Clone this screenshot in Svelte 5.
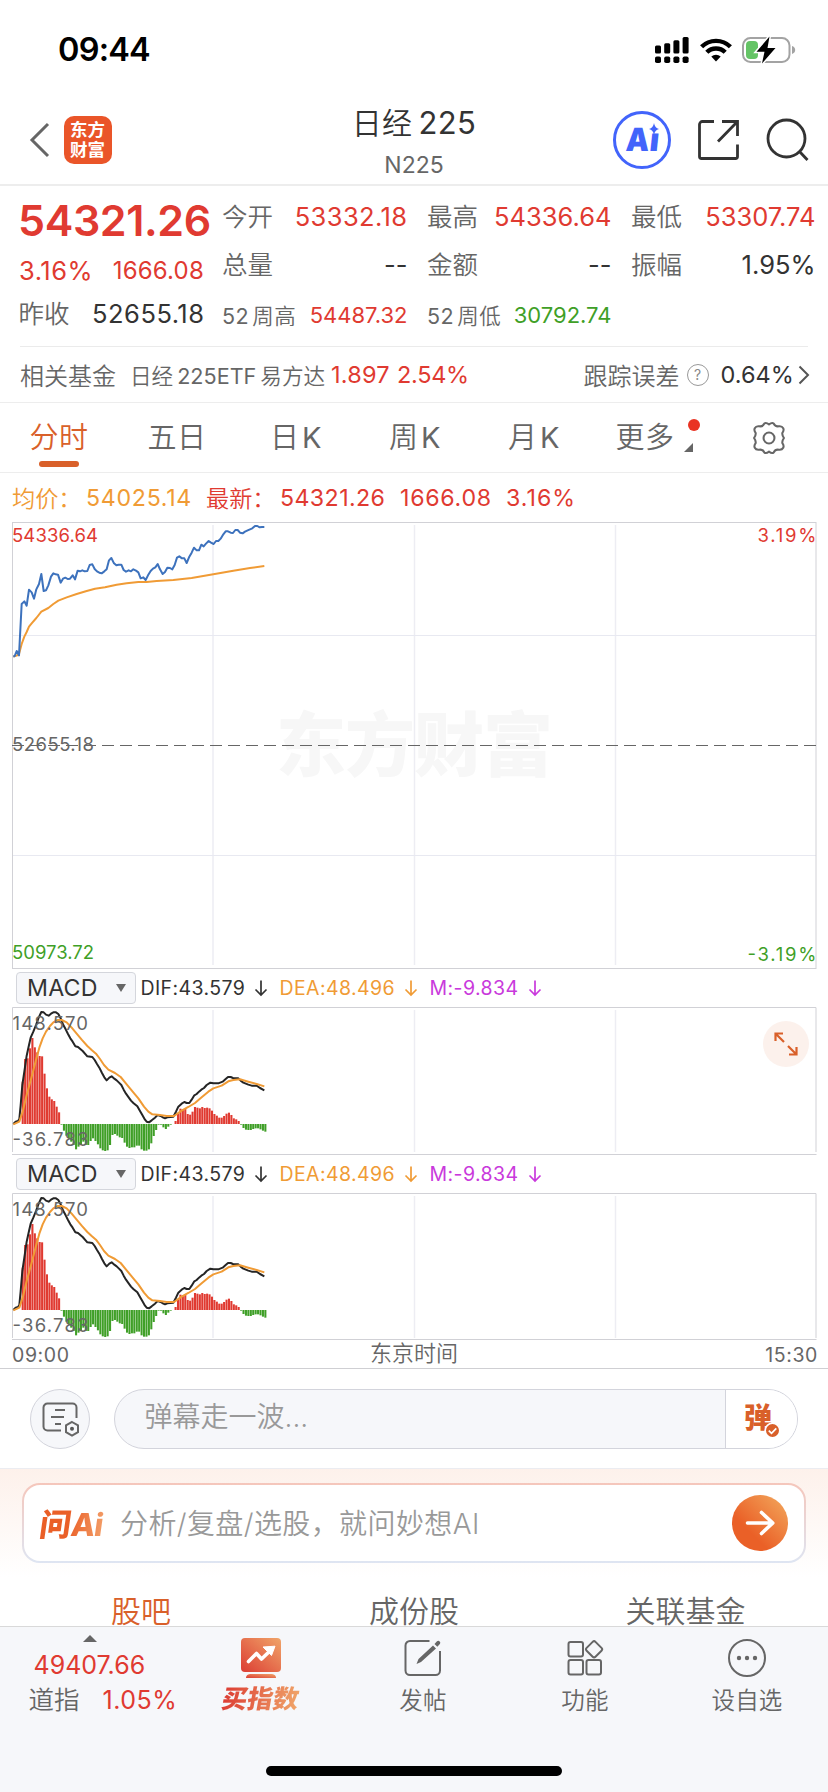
<script>
  const price = '40,440 44,438 50,423 57,436 65,282 73,274 80,287 87,239 95,247 102,266 109,238 117,222 124,192 131,243 138,241 145,226 153,200 160,190 167,193 174,194 182,218 189,206 196,203 203,207 210,206 218,196 225,208 233,182 240,184 247,181 254,184 262,183 269,165 277,163 284,177 291,184 298,188 305,190 313,184 320,178 327,151 334,144 342,160 349,166 356,164 364,164 371,180 378,185 386,181 393,184 400,178 408,182 415,187 422,205 430,202 437,210 444,196 452,183 459,176 466,172 473,162 480,178 488,192 495,186 502,173 510,174 517,178 524,165 531,143 538,139 546,145 553,145 560,159 568,140 575,128 582,113 590,121 597,121 604,104 611,109 618,101 626,93 633,98 641,102 648,93 655,93 662,86 670,73 677,64 684,64 692,68 699,69 706,60 713,60 720,68 728,70 735,65 743,61 750,58 757,55 765,48 772,48 779,52 786,51 793,51';
  const average = '40,440 50,437 57,432 65,402 73,380 80,366 87,350 95,340 109,324 124,305 145,294 160,282 175,272 200,262 230,252 260,243 285,236 315,232 350,224 380,220 415,216 440,216 470,213 520,210 575,204 640,193 700,182 750,174 793,168';
  const dif = '40,477 47,470 54,468 58,462 62,420 67,360 73,320 80,272 87,240 92,218 100,200 108,180 116,158 124,141 131,142 138,149 146,152 153,146 160,142 168,142 175,147 182,160 190,180 197,193 204,207 211,220 218,230 226,244 234,246 248,258 262,274 277,276 284,285 291,297 298,308 306,324 313,337 320,346 328,338 335,334 343,341 350,346 357,353 364,360 371,374 378,386 386,397 393,407 400,414 412,424 420,438 427,450 435,464 440,470 447,472 455,466 465,458 473,450 482,453 490,458 495,460 502,457 520,455 528,440 535,425 545,416 553,411 560,414 568,414 575,404 583,391 590,387 597,380 604,374 612,369 620,360 631,353 640,355 655,355 668,350 677,342 684,336 692,336 699,339 715,340 722,347 730,353 745,359 755,362 770,362 780,369 793,376';
  const dea = '40,478 58,470 68,440 80,390 95,335 108,285 118,248 128,220 138,200 150,183 160,172 172,165 185,165 200,172 215,188 230,206 245,224 262,243 275,255 288,266 300,282 312,300 325,314 345,324 362,336 380,358 398,380 415,400 432,425 445,440 457,448 480,450 500,453 522,453 545,437 565,426 585,414 605,397 625,380 640,370 665,362 685,349 700,345 720,343 745,350 770,357 793,364';
  const bars = [127, 195, 197, 227, 258, 230, 215, 204, 203, 151, 107, 82, 74, 69, 52, 35, -2,
    -20, -35, -43, -53, -63, -76, -68, -63, -53, -63, -63, -51, -43, -51, -61, -73, -79, -81, -79, -63, -33, -30, -35, -40, -42, -56, -68, -72, -70, -70, -65, -65, -76, -80, -80, -76, -58, -36, -18,
    -2, -2, -10, -15, -8, -2, 0,
    9, 31, 46, 44, 46, 30, 28, 37, 51, 49, 47, 51, 48, 49, 47, 40, 30, 25, 19, 19, 24, 31, 34, 27, 17, 14, 9,
    -2, -12, -17, -18, -18, -15, -13, -13, -16, -20, -23];
</script>

{#snippet macd(bottom)}
  <div class="macd-head">
    <div class="picker"><span>MACD</span><i></i></div>
    <span class="ind d1">DIF:43.579</span><svg class="arr a1" viewBox="0 0 14 18"><path d="M7 1.500v14M1.500 10.500 7 16l5.500-5.500" /></svg>
    <span class="ind d2">DEA:48.496</span><svg class="arr a2" viewBox="0 0 14 18"><path d="M7 1.500v14M1.500 10.500 7 16l5.500-5.500" /></svg>
    <span class="ind d3">M:-9.834</span><svg class="arr a3" viewBox="0 0 14 18"><path d="M7 1.500v14M1.500 10.500 7 16l5.500-5.500" /></svg>
  </div>
  <svg class="macd-chart" height={bottom - 1004} viewBox="0 1005 828 {bottom - 1004}">
    <path d="M213 1010v142M414.500 1010v142M615.500 1010v142" stroke="#ededf3" stroke-width="1.500" />
    <path d="M12.500 1152V1007.500H816V1152M12 {bottom - .5}H816.500" fill="none" stroke="#d1d1d6" />
    <g transform="translate(0 965) scale(.33333)">
      {#each bars as v, i}
        <rect x={65 + i * 7.28} y={v > 0 ? 477 - v : 477} width="6.200" height={Math.abs(v)} fill={v > 0 ? '#e03a31' : '#3f9f27'} />
      {/each}
      <polyline points={dif} fill="none" stroke="#252525" stroke-width="6" stroke-linejoin="round" />
      <polyline points={dea} fill="none" stroke="#f09b35" stroke-width="6" stroke-linejoin="round" />
    </g>
    <text x="12.500" y="1029.500" class="axis" fill="#666" textLength="75.500">148.570</text>
    <text x="12.500" y="1145.500" class="axis" fill="#666" textLength="76">-36.783</text>
  </svg>
{/snippet}

<div class="page">
  <div class="status">
    <span class="time">09:44</span>
    <div class="status-icons">
      <svg width="34" height="26" viewBox="0 0 34 26">
        <g fill="#000">
          <rect x="0" y="8.500" width="6" height="8" rx="1.500" /><rect x="9.200" y="6.300" width="6" height="10.200" rx="1.500" /><rect x="18.400" y="3.300" width="6" height="13.200" rx="1.500" /><rect x="27.600" y="0" width="6" height="16.500" rx="1.500" />
          <rect x="0" y="19.500" width="6" height="6.500" rx="1.800" /><rect x="9.200" y="19.500" width="6" height="6.500" rx="1.800" /><rect x="18.400" y="19.500" width="6" height="6.500" rx="1.800" /><rect x="27.600" y="19.500" width="6" height="6.500" rx="1.800" />
        </g>
      </svg>
      <svg width="32" height="24" viewBox="0 0 32 24">
        <g fill="none" stroke="#000" stroke-width="4.400"><path d="M1.600 8.800a20.500 20.500 0 0 1 28.800 0" /><path d="M6.800 14.300a13 13 0 0 1 18.400 0" /></g>
        <path d="M16 23.500l-4.700-5a7 7 0 0 1 9.400 0z" />
      </svg>
      <svg width="54" height="28" viewBox="0 0 54 28">
        <rect x="1" y="2" width="46.500" height="24" rx="7.500" fill="none" stroke="#a3a3a3" stroke-width="2" />
        <path d="M50 10v8c2-.6 3.200-2.200 3.200-4S52 10.600 50 10z" fill="#a3a3a3" />
        <rect x="4" y="5" width="12" height="18" rx="4" fill="#65c466" />
        <path d="M27.500.5 14.500 15.700h8L20 27.500 33.500 12h-8z" stroke="#fff" stroke-width="3" paint-order="stroke" />
      </svg>
    </div>
  </div>

  <header>
    <svg class="back" width="22" height="36" viewBox="0 0 22 36"><path d="M19 2 3 18l16 16" fill="none" stroke="#666" stroke-width="3" /></svg>
    <div class="logo"><span>东方</span><span>财富</span></div>
    <div class="title"><h1>日经<span>225</span></h1><p>N225</p></div>
    <div class="ai"><span>A</span><span class="ai-i">ı</span>
      <svg width="10" height="12" viewBox="0 0 10 12"><path d="M5 0q.8 5 5 6-4.200 1-5 6-.8-5-5-6 4.200-1 5-6z" fill="#4264fb" /></svg>
    </div>
    <svg class="share" width="42" height="42" viewBox="0 0 42 42"><path d="M16 2.500H4.500a3 3 0 0 0-3 3v32a2 2 0 0 0 2 2h34a2 2 0 0 0 2-2V25.500M39.500 17V2.500H24M39 3 20 22.500" fill="none" stroke="#333" stroke-width="2.800" /></svg>
    <svg class="search" width="44" height="44" viewBox="0 0 44 44"><g fill="none" stroke="#333" stroke-width="2.800"><circle cx="20.500" cy="20.500" r="18.500" /><path d="m33 33 8.500 9" /></g></svg>
  </header>

  <section class="quote">
    <div class="main">
      <div class="price">54321.26</div>
      <div class="chg"><span>3.16%</span><span>1666.08</span></div>
      <div class="prev"><span class="k">昨收</span><span>52655.18</span></div>
    </div>
    <div class="stats">
      <div class="cell"><span class="k">今开</span><span class="v up wide">53332.18</span></div>
      <div class="cell"><span class="k">最高</span><span class="v up">54336.64</span></div>
      <div class="cell"><span class="k">最低</span><span class="v up">53307.74</span></div>
      <div class="cell"><span class="k">总量</span><span class="v">--</span></div>
      <div class="cell"><span class="k">金额</span><span class="v">--</span></div>
      <div class="cell"><span class="k">振幅</span><span class="v">1.95%</span></div>
      <div class="cell sm"><span class="k">52<b>周高</b></span><span class="v up">54487.32</span></div>
      <div class="cell sm"><span class="k">52<b>周低</b></span><span class="v down">30792.74</span></div>
    </div>
  </section>

  <div class="related">
    <span class="r1">相关基金</span>
    <span class="r2">日经<em>225ETF</em>易方达</span>
    <span class="r3">1.897</span><span class="r4">2.54%</span>
    <span class="r5">跟踪误差</span>
    <span class="help">?</span>
    <span class="r6">0.64%</span>
    <svg width="12" height="20" viewBox="0 0 12 20"><path d="m1.500 1.500 8.500 8.500-8.500 8.500" fill="none" stroke="#555" stroke-width="2" /></svg>
  </div>

  <nav class="periods">
    <span class="on">分时</span><span>五日</span><span>日<em>K</em></span><span>周<em>K</em></span><span>月<em>K</em></span>
    <span class="more">更多<i class="dot"></i><i class="tri"></i></span>
    <svg width="34" height="34" viewBox="-16.500 -16.500 33 33"><g fill="none" stroke="#666" stroke-width="2"><path d="M-4.500-14Q-3-15.500 0-13.200 3-15.500 4.500-14 6-11 9-11.300 12.500-12 13.800-9.500 14.800-7.500 13-5 12.500-2.800 14.500 0 12.500 2.800 13 5 14.800 7.500 13.800 9.500 12.500 12 9 11.300 6 11 4.500 14 3 15.500 0 13.200-3 15.500-4.500 14-6 11-9 11.300-12.500 12-13.800 9.500-14.800 7.500-13 5-12.500 2.800-14.500 0-12.500-2.800-13-5-14.800-7.500-13.800-9.500-12.500-12-9-11.300-6-11-4.500-14Z" stroke-linejoin="round" /><circle r="5.300" /></g></svg>
  </nav>

  <div class="info">
    <span class="avg">均价：</span><span class="avg n1">54025.14</span>
    <span class="up i2">最新：</span><span class="up n2">54321.26</span><span class="up n3">1666.08</span><span class="up n4">3.16%</span>
  </div>

  <svg class="chart" viewBox="0 521 828 449">
    <text x="276" y="771" class="mark" textLength="277">东方财富</text>
    <path d="M213 525v440M414.500 525v440M615.500 525v440" stroke="#ededf3" stroke-width="1.500" />
    <path d="M12.500 635.500H816M12.500 855.500H816" stroke="#e8e9f1" />
    <rect x="12.500" y="522.500" width="803.500" height="446" fill="none" stroke="#d1d1d6" />
    <path d="M12 745.500H816" stroke="#666" stroke-width="1.200" stroke-dasharray="12 6" />
    <g transform="translate(0 510) scale(.33333)" fill="none" stroke-width="6" stroke-linejoin="round">
      <polyline points={average} stroke="#f09b35" />
      <polyline points={price} stroke="#3d72bd" />
    </g>
    <text x="12" y="541.500" class="axis" fill="#e03a31" textLength="86">54336.64</text>
    <text x="757.500" y="541.500" class="axis" fill="#e03a31" textLength="59">3.19%</text>
    <text x="12" y="750.500" class="axis" fill="#666" textLength="82">52655.18</text>
    <text x="12" y="959" class="axis" fill="#3f9f27" textLength="82">50973.72</text>
    <text x="747.500" y="960.500" class="axis" fill="#3f9f27" textLength="69">-3.19%</text>
  </svg>

  <div class="macd-wrap">
    {@render macd(1155)}
    <div class="expand"><svg width="24" height="24" viewBox="0 0 24 24"><path d="M1.500 9V1.500H9M2 2l8 8M22.500 15v7.500H15M22 22l-8-8" fill="none" stroke="#d9602a" stroke-width="2.200" /></svg></div>
  </div>
  {@render macd(1154)}

  <div class="times"><span class="t1">09:00</span><span class="t2">东京时间</span><span class="t3">15:30</span></div>

  <div class="danmu">
    <div class="round">
      <svg width="38" height="36" viewBox="0 0 38 36"><g fill="none" stroke="#666" stroke-width="2"><path d="M20 29.500H6.500a4 4 0 0 1-4-4v-19a4 4 0 0 1 4-4h25a4 4 0 0 1 4 4V17" /><path d="M14 9h10M10 16h13M14 23h6" /><path d="m31 21 6 3.400v6.800L31 34.600l-6-3.400v-6.800z" /></g><circle cx="31" cy="27.800" r="2" fill="#555" /></svg>
    </div>
    <div class="pill">
      <span class="ph">弹幕走一波...</span>
      <div class="send"><span>弹</span><svg width="17" height="17" viewBox="0 0 17 17"><circle cx="8.500" cy="8.500" r="7.300" fill="#d9602a" stroke="#fff" stroke-width="1.600" /><path d="m4.800 8.700 2.700 2.600 4.800-5" fill="none" stroke="#fff" stroke-width="1.700" /></svg></div>
    </div>
  </div>

  <div class="ask-bg">
    <div class="ask">
      <span class="wen">问<em>Ai</em></span>
      <span class="ask-ph">分析/复盘/选股，就问妙想AI</span>
      <svg width="56" height="56" viewBox="0 0 56 56">
        <defs><linearGradient id="go" x1=".2" y1=".8" x2=".85" y2=".15"><stop offset=".2" stop-color="#ea6027" /><stop offset="1" stop-color="#f19a52" /></linearGradient></defs>
        <circle cx="28" cy="28" r="28" fill="url(#go)" /><path d="M15.500 28h25M29.500 17.500 40.800 28 29.500 38.500" fill="none" stroke="#fff" stroke-width="3.600" stroke-linecap="round" stroke-linejoin="round" />
      </svg>
    </div>
    <div class="tabs"><span class="on">股吧</span><span>成份股</span><span>关联基金</span></div>
  </div>

  <footer>
    <div class="dow"><i></i><div class="dv">49407.66</div><div class="dl"><span>道指</span><b>1.05%</b></div></div>
    <div class="item buy">
      <svg width="42" height="40" viewBox="0 0 42 40">
        <defs><linearGradient id="buy" x1="0" y1="1" x2="1" y2="0"><stop stop-color="#dc3c33" /><stop offset="1" stop-color="#f0a569" /></linearGradient></defs>
        <rect x="1" y="0" width="40" height="34" rx="4" fill="url(#buy)" /><path d="M6 40a5 4 0 0 1 4-4h22a5 4 0 0 1 4 4z" fill="url(#buy)" />
        <path d="m8.500 23.500 8-8 5 5.500 10-9.500" fill="none" stroke="#fff" stroke-width="3.600" stroke-linecap="round" stroke-linejoin="round" /><path d="M23 9l12-.8-3.500 9.300z" fill="#fff" stroke="#fff" stroke-linejoin="round" />
      </svg>
      <span>买指数</span>
    </div>
    <div class="item">
      <svg width="38" height="38" viewBox="0 0 38 38"><path d="M25.500 2H6a4.500 4.500 0 0 0-4.500 4.500v25A4.500 4.500 0 0 0 6 36h25.500a4.500 4.500 0 0 0 4.500-4.500V12" fill="none" stroke="#666" stroke-width="2" /><path d="M12.500 25l2-5L29 6.500l3 3L17 23z M30.500 5l2.500-2.800q1.500-1 2.700.2 1.200 1.300.2 2.700L33.300 7.800z" fill="#666" /></svg>
      <span>发帖</span>
    </div>
    <div class="item">
      <svg width="38" height="38" viewBox="0 0 38 38"><g fill="none" stroke="#666" stroke-width="2"><rect x="2.500" y="3" width="14.500" height="14.500" rx="2" /><rect x="2.500" y="21" width="14.500" height="14.500" rx="2" /><rect x="20.500" y="21" width="14.500" height="14.500" rx="2" /><rect x="21.800" y="4" width="12.500" height="12.500" rx="2" transform="rotate(45 28 10.300)" /></g></svg>
      <span>功能</span>
    </div>
    <div class="item">
      <svg width="38" height="38" viewBox="0 0 38 38"><circle cx="19" cy="19" r="18" fill="none" stroke="#666" stroke-width="2" /><g fill="#666"><circle cx="11" cy="19" r="2.200" /><circle cx="19" cy="19" r="2.200" /><circle cx="27" cy="19" r="2.200" /></g></svg>
      <span>设自选</span>
    </div>
    <div class="home"></div>
  </footer>
</div>

<style>
  :global(body) { background: #fff; }
  .page { width: 828px; height: 1792px; overflow: hidden; display: flex; flex-direction: column; background: #fff; font-family: "Inter", "Noto Sans CJK SC", sans-serif; color: #333; box-sizing: border-box; white-space: nowrap; }
  .page * { box-sizing: border-box; flex-shrink: 0; }
  em, i { font-style: normal; }
  h1, p { margin: 0; font-weight: 400; }
  svg { display: block; }
  .up { color: #e03a31; }
  .down { color: #3f9f27; }

  .status { height: 95px; padding: 0 32px 0 58px; display: flex; justify-content: space-between; align-items: flex-start; }
  .time { margin-top: 30px; line-height: 40px; font-size: 32.5px; font-weight: 600; letter-spacing: -.8px; color: #000; }
  .status-icons { display: flex; align-items: center; gap: 11px; margin-top: 36px; }
  .status-icons svg:last-child { margin-left: -1px; }

  header { height: 91px; border-bottom: 2px solid #ededed; display: grid; grid-template-columns: 64px 48px 190px 224px 87px 85px 68px 62px; align-items: center; }
  .back { margin-left: 29px; }
  .logo { width: 48px; height: 48px; border-radius: 10px; background: #ea5529; color: #fff; font-family: "Noto Sans CJK SC", sans-serif; font-size: 17.5px; font-weight: 700; line-height: 20px; padding: 3px 0 0 6px; }
  .logo span { display: block; }
  .title { grid-column: 4; text-align: center; padding-top: 6px; }
  h1 { font-size: 30px; font-weight: 350; line-height: 38px; letter-spacing: .4px; }
  h1 span { font-size: 31px; font-weight: 400; margin-left: 6px; }
  .title p { font-size: 23px; line-height: 34px; margin-top: 6px; color: #666; }
  .ai { grid-column: 6; justify-self: start; width: 58px; height: 58px; border: 3px solid #4264fb; border-radius: 50%; color: #4264fb; font-size: 32px; font-weight: 900; display: flex; justify-content: center; align-items: center; position: relative; line-height: 1; }
  .ai span:first-child { transform: scaleX(.92) skewX(-4deg); }
  .ai-i { transform: skewX(-6deg); font-weight: 900; font-size: 32px; }
  .ai svg { position: absolute; right: 9px; top: 9px; }
  .share, .search { align-self: center; }

  .quote { height: 161px; margin-left: 20px; width: 788px; border-bottom: 1px solid #ebebeb; display: flex; }
  .main { width: 202px; }
  .price { height: 68px; line-height: 69px; font-size: 43px; font-weight: 600; letter-spacing: -.4px; color: #e03a31; margin-left: -2px; }
  .chg { display: flex; justify-content: space-between; width: 185px; color: #e03a31; line-height: 34px; font-size: 24px; letter-spacing: .2px; margin-left: -1px; }
  .chg span:first-child { font-size: 25.5px; letter-spacing: .5px; }
  .prev { display: flex; justify-content: space-between; width: 186px; line-height: 40px; margin-top: 6px; font-size: 25.5px; letter-spacing: .5px; margin-left: -1.5px; }
  .k { color: #666; font-size: 25.500px; font-weight: 350; padding-bottom: 4px; }
  .prev .k { padding: 0; letter-spacing: 0; }
  .stats { display: grid; grid-template-columns: 185px 184px 184px; grid-template-rows: 48px 48px 48px; column-gap: 20px; padding-top: 6px; }
  .cell { display: flex; justify-content: space-between; align-items: center; }
  .v { font-size: 25.500px; margin-right: -.5px; }
  .wide { letter-spacing: .4px; }
  .sm { padding-top: 5px; }
  .sm .k { font-size: 21.500px; letter-spacing: .5px; padding-bottom: 1px; font-weight: 400; }
  .sm .k b { font-weight: 350; margin-left: 3px; }
  .sm .v { font-size: 22px; }

  .related { height: 55px; display: flex; align-items: center; padding-left: 20px; font-size: 24px; color: #666; }
  .r1, .r2, .r5 { font-weight: 350; padding-bottom: 1px; }
  .r2 { font-size: 21.600px; margin-left: 14px; width: 201px; }
  .r2 em { margin: 0 4px; font-weight: 400; }
  .r3, .r4 { color: #e03a31; font-size: 23.5px; letter-spacing: .2px; }
  .r3 { width: 66px; }
  .r4 { width: 186.5px; letter-spacing: -.3px; }
  .help { width: 22px; height: 22px; border: 1.500px solid #999; border-radius: 50%; font-size: 14px; line-height: 19px; text-align: center; color: #888; margin: 0 12px 0 7px; }
  .r6 { color: #333; font-size: 23.500px; width: 77px; }

  .periods { height: 71px; border-top: 1px solid #ededed; border-bottom: 1px solid #ededed; display: grid; grid-template-columns: 118px 118px 120px 118px 120px 144px 62px; align-items: center; justify-items: center; font-size: 29px; letter-spacing: .5px; color: #666; }
  .periods > span { position: relative; padding-bottom: 5px; font-weight: 350; }
  .periods em { margin-left: 2.5px; font-weight: 400; }
  .periods .on { color: #d9602a; }
  .periods .on::after { content: ""; position: absolute; left: 10px; width: 40px; height: 6px; border-radius: 3px; bottom: -6px; background: #d9602a; }
  .periods .more { left: -21px; }
  .dot { position: absolute; left: 73px; top: 5px; width: 12px; height: 12px; border-radius: 50%; background: #e93323; }
  .tri { position: absolute; left: 69px; top: 29px; border-left: 9px solid transparent; border-bottom: 9px solid #666; }

  .info { height: 48px; display: flex; align-items: center; padding: 1px 0 0 12px; font-size: 23.2px; letter-spacing: .7px; }
  .avg { color: #f09b35; }
  .info > span { width: 74px; }
  .info > span:nth-child(odd):not(.n3) { letter-spacing: 0; padding-bottom: 2px; font-weight: 350; }
  .info .n1 { width: 120px; }
  .info .n2 { width: 120px; letter-spacing: .4px; }
  .info .n3 { width: 106px; }
  .info .n4 { letter-spacing: 1px; }
  .chart { width: 828px; height: 449px; }
  .axis { font-family: "Inter", sans-serif; font-size: 18.500px; }
  .mark { font-family: "Noto Sans CJK SC", sans-serif; font-size: 70px; font-weight: 900; fill: #f7f7f7; }

  .macd-wrap { position: relative; }
  .macd-head { height: 35px; display: flex; align-items: center; padding-left: 16px; }
  .picker { width: 120px; height: 32px; border: 1.500px solid #d4d6dc; border-radius: 4px; background: #f6f7fa; display: flex; align-items: center; justify-content: space-between; padding: 0 9px 0 10px; font-size: 23.2px; letter-spacing: .2px; }
  .picker i { border: 5px solid transparent; border-top: 8px solid #666; border-bottom: 0; }
  .ind { font-size: 19.500px; margin-left: 4.5px; letter-spacing: .4px; }
  .d1 { width: 113px; }
  .d2 { width: 124px; color: #f09b35; margin-left: 12px; }
  .d3 { width: 98px; color: #c939dc; margin-left: 12px; }
  .arr { width: 14px; height: 18px; fill: none; stroke: #333; stroke-width: 1.700; }
  .a2 { stroke: #f09b35; }
  .a3 { stroke: #c939dc; }
  .macd-chart { width: 828px; }
  .expand { position: absolute; left: 763px; top: 51px; width: 46px; height: 46px; border-radius: 50%; background: #fcf1ec; display: flex; align-items: center; justify-content: center; }

  .times { height: 28px; border-bottom: 1px solid #cfcfd3; display: grid; grid-template-columns: 200px 1fr 200px; align-items: center; padding: 0 10px 0 12px; font-size: 19.500px; letter-spacing: .6px; color: #666; }
  .t2 { font-size: 22px; line-height: 24px; letter-spacing: 0; font-weight: 350; padding: 0 2px 3px 0; text-align: center; }
  .t3 { text-align: right; }

  .danmu { height: 100px; border-bottom: 1px solid #ebecf1; display: flex; align-items: center; padding-left: 30px; gap: 24px; }
  .round { width: 60px; height: 60px; border-radius: 50%; border: 1px solid #d3d4dc; background: #f6f7fa; display: flex; align-items: center; justify-content: center; }
  .pill { width: 684px; height: 60px; border: 1px solid #d3d4dc; border-radius: 30px; overflow: hidden; background: #f6f7fa; display: flex; justify-content: space-between; }
  .ph { font-size: 28px; font-weight: 350; line-height: 54px; color: #999; margin-left: 29.5px; }
  .send { width: 72px; border-left: 1px solid #d3d4dc; background: #fff; position: relative; font-size: 28px; font-weight: 900; line-height: 56px; color: #d9602a; padding-left: 18px; }
  .send svg { position: absolute; left: 38px; top: 32px; }

  .ask-bg { height: 157px; background: linear-gradient(#fdf1eb, #fff 108px); padding: 14px 22px 0; overflow: hidden; }
  .ask { height: 80px; border: 2px solid transparent; border-radius: 18px; background: linear-gradient(#fff, #fff) padding-box, linear-gradient(#f5c6bb, #dee5f2) border-box; display: flex; align-items: center; padding: 0 16px; }
  .wen { width: 80px; padding-bottom: 3px; font-size: 31.5px; font-weight: 900; transform: skewX(-8deg); color: transparent; background: linear-gradient(90deg, #ea5f27 35%, #f3a06a 82%); background-clip: text; -webkit-background-clip: text; }
  .wen em { font-family: "Inter", sans-serif; font-weight: 800; letter-spacing: -1px; }
  .ask-ph { width: 612px; font-size: 28px; font-weight: 350; letter-spacing: .4px; padding-bottom: 3px; color: #999; }
  .tabs { display: grid; grid-template-columns: 238px 308px 235px; justify-items: center; font-size: 30px; font-weight: 350; line-height: 50px; margin-top: 23px; color: #666; }
  .tabs .on { color: #d9602a; }

  footer { height: 166px; border-top: 1px solid #d9d9d9; background: #f6f7fa; display: grid; grid-template-columns: 180px 162px 162px 162px 162px; position: relative; color: #666; }
  .dow { padding: 8px 0 0 28.5px; font-size: 25px; }
  .dow i { display: block; width: 14px; margin-left: 54px; border: 7px solid transparent; border-bottom-color: #666; border-top: 0; }
  .dv { color: #e03a31; line-height: 30px; margin: 8px 0 0 5px; }
  .dl { display: flex; gap: 23px; line-height: 36px; margin-top: 2px; align-items: center; }
  .dl span { font-size: 25.5px; font-weight: 350; }
  .dl b { font-weight: 400; letter-spacing: .5px; color: #e03a31; }
  .item { display: flex; flex-direction: column; align-items: center; padding-top: 12px; font-size: 23.500px; }
  .item span { line-height: 32px; margin-top: 8px; font-weight: 350; letter-spacing: .2px; }
  .buy { padding-top: 11px; }
  .buy span { font-size: 25.5px; font-weight: 900; margin-top: 5px; transform: skewX(-10deg); color: transparent; background: linear-gradient(90deg, #dc3c33, #f0a569); background-clip: text; -webkit-background-clip: text; }
  .home { position: absolute; left: 266px; top: 139px; width: 296px; height: 10px; border-radius: 5px; background: #000; }
</style>
